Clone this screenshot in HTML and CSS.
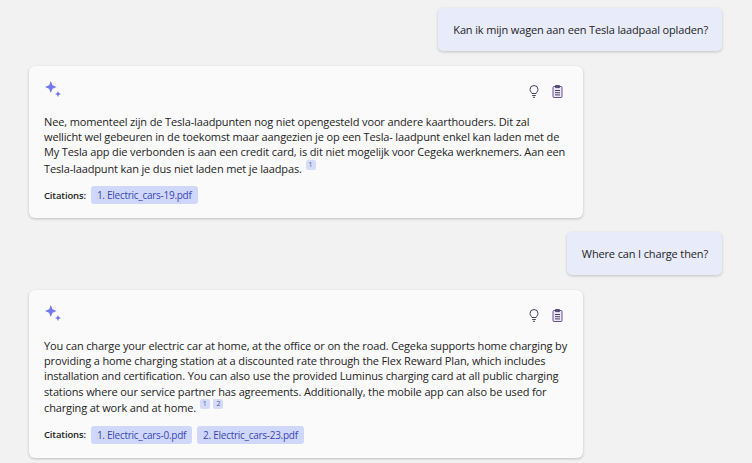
FILE: index.html
```html
<!DOCTYPE html>
<html lang="nl">
<head>
<meta charset="utf-8">
<title>Chat</title>
<link rel="stylesheet" href="styles.css">
</head>
<body>
<main class="chat">
  <div class="user"><p>Kan ik mijn wagen aan een Tesla laadpaal opladen?</p></div>
  <section class="card">
    <div class="head">
      <svg class="spark" viewBox="0 0 16 16"><path d="M5.800 0 7.500 4.200 11.600 6 7.500 7.800 5.800 12 4.100 7.800 0 6 4.100 4.200z"/><path d="M13 9.900 13.900 12 16 13 13.900 14 13 16.100 12.100 14 10 13 12.100 12z"/></svg>
      <div class="tools">
        <svg class="icon bulb-icon" viewBox="0 0 10 13"><path class="line" d="M3 8.500C2.800 7.500 1 6.500 1 4.500A4 4 0 0 1 9 4.500C9 6.500 7.200 7.500 7 8.500Z"/><path class="line" d="M3.200 10.500h3.600M4 12.300h2"/></svg>
        <svg class="icon clip-icon" viewBox="0 0 11 13"><rect class="board" x="1" y="1.500" width="9" height="11" rx="1"/><path class="line" d="M3.500.6h4v2h-4zM3 5.500h5M3 7.700h5M3 9.900h5"/></svg>
      </div>
    </div>
    <p class="body">Nee, momenteel zijn de Tesla-laadpunten nog niet opengesteld voor andere kaarthouders. Dit zal wellicht wel gebeuren in de toekomst maar aangezien je op een Tesla- laadpunt enkel kan laden met de My Tesla app die verbonden is aan een credit card, is dit niet mogelijk voor Cegeka werknemers. Aan een Tesla-laadpunt kan je dus niet laden met je laadpas. <sup class="ref">1</sup></p>
    <div class="cites"><strong>Citations:</strong><span class="chip">1. Electric_cars-19.pdf</span></div>
  </section>
  <div class="user second"><p>Where can I charge then?</p></div>
  <section class="card">
    <div class="head">
      <svg class="spark" viewBox="0 0 16 16"><path d="M5.800 0 7.500 4.200 11.600 6 7.500 7.800 5.800 12 4.100 7.800 0 6 4.100 4.200z"/><path d="M13 9.900 13.900 12 16 13 13.900 14 13 16.100 12.100 14 10 13 12.100 12z"/></svg>
      <div class="tools">
        <svg class="icon bulb-icon" viewBox="0 0 10 13"><path class="line" d="M3 8.500C2.800 7.500 1 6.500 1 4.500A4 4 0 0 1 9 4.500C9 6.500 7.200 7.500 7 8.500Z"/><path class="line" d="M3.200 10.500h3.600M4 12.300h2"/></svg>
        <svg class="icon clip-icon" viewBox="0 0 11 13"><rect class="board" x="1" y="1.500" width="9" height="11" rx="1"/><path class="line" d="M3.500.6h4v2h-4zM3 5.500h5M3 7.700h5M3 9.900h5"/></svg>
      </div>
    </div>
    <p class="body">You can charge your electric car at home, at the office or on the road. Cegeka supports home charging by providing a home charging station at a discounted rate through the Flex Reward Plan, which includes installation and certification. You can also use the provided Luminus charging card at all public charging stations where our service partner has agreements. Additionally, the mobile app can also be used for charging at work and at home. <sup class="ref">1</sup> <sup class="ref">2</sup></p>
    <div class="cites"><strong>Citations:</strong><span class="chip">1. Electric_cars-0.pdf</span><span class="chip">2. Electric_cars-23.pdf</span></div>
  </section>
</main>
</body>
</html>
```
FILE: styles.css
```css
* { box-sizing: border-box; }
html, body { margin: 0; height: 100%; }
body {
  background: #f2f2f2;
  color: #242424;
  font-family: "Open Sans", "Noto Sans", sans-serif;
  font-size: 11px;
  letter-spacing: -0.14px;
  line-height: 15.4px;
  overflow: hidden;
}
p { margin: 0; }
.chat {
  display: flex;
  flex-direction: column;
  padding: 8px 30px 0 29px;
}
.user {
  align-self: flex-end;
  height: 43px;
  background: #e8ebfa;
  border-radius: 5px;
  box-shadow: 0 1px 3px rgba(0,0,0,.2);
  padding: 14px 14px 0 15px;
  margin-bottom: 15px;
}
.card {
  width: 554px;
  height: 152px;
  background: #fafafa;
  border-radius: 6px;
  box-shadow: 0 1px 3px rgba(0,0,0,.22);
  padding: 15px 15px 0;
  margin-bottom: 14px;
}
.card:last-child { height: 168px; }
.head {
  display: flex;
  justify-content: space-between;
  align-items: flex-start;
  height: 32.6px;
}
.spark { width: 16px; height: 16px; fill: #7378e8; margin-left: 1px; }
.tools { display: flex; gap: 13px; margin: 4px 5px 0 0; }
.icon { height: 13px; fill: none; }
.bulb-icon { width: 10px; }
.clip-icon { width: 11px; }
.line { stroke: #453f5c; stroke-width: 1; fill: none; }
.board { fill: #ece7f3; stroke: #6b4f96; stroke-width: 1; }
.ref {
  display: inline-block;
  min-width: 10px;
  height: 10px;
  padding: 0 2px;
  margin-left: 1px;
  border-radius: 2px;
  background: #d5dcf7;
  color: #4f52b2;
  font-size: 7px;
  letter-spacing: 0;
  line-height: 10px;
  text-align: center;
  vertical-align: 6px;
}
.cites {
  display: flex;
  align-items: center;
  gap: 5px;
  margin-top: 10px;
  font-size: 9.5px;
  letter-spacing: -0.15px;
}
.cites strong { font-weight: 600; }
.chip {
  background: #cfd8fb;
  color: #3b45b0;
  border-radius: 3px;
  padding: 1px 6px;
  font-size: 10px;
  font-weight: 500;
  letter-spacing: -0.27px;
  line-height: 16px;
}
```
